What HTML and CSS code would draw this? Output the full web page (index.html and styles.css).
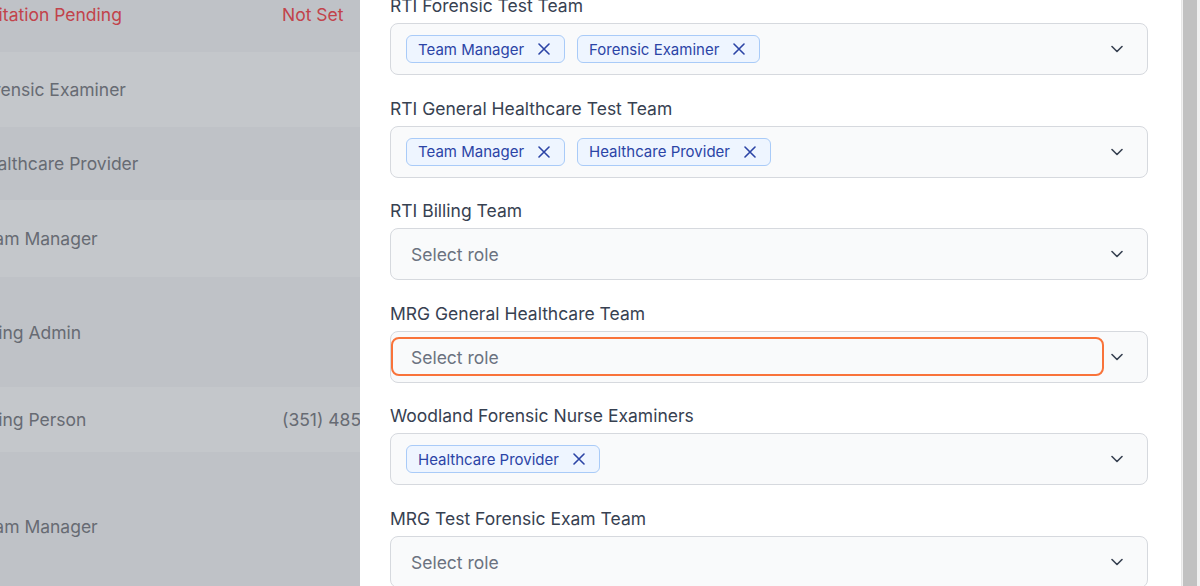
FILE: index.html
```html
<!DOCTYPE html>
<html lang="en">
<head>
<meta charset="utf-8">
<title>Team roles</title>
<link rel="stylesheet" href="styles.css">
</head>
<body>
<div class="screen">
  <div class="backdrop">
    <div class="table">
      <div class="row dark h76"><span class="role red">Invitation Pending</span><span class="phone red">Not Set</span></div>
      <div class="row light h75"><span class="role">Forensic Examiner</span><span class="phone"></span></div>
      <div class="row dark h73"><span class="role">Healthcare Provider</span><span class="phone"></span></div>
      <div class="row light h77"><span class="role">Team Manager</span><span class="phone"></span></div>
      <div class="row dark h110"><span class="role">Billing Admin</span><span class="phone"></span></div>
      <div class="row light h65"><span class="role">Billing Person</span><span class="phone">(351) 485-2210</span></div>
      <div class="row dark h148"><span class="role">Team Manager</span><span class="phone"></span></div>
    </div>
  </div>

  <div class="panel">
    <div class="form">
      <div class="field">
        <div class="label">RTI Forensic Test Team</div>
        <div class="select">
          <div class="value chips">
            <span class="chip">Team Manager<svg class="x" viewBox="0 0 12 12"><path d="M1 1L11 11M11 1L1 11"/></svg></span>
            <span class="chip">Forensic Examiner<svg class="x" viewBox="0 0 12 12"><path d="M1 1L11 11M11 1L1 11"/></svg></span>
          </div>
          <div class="chev"><svg viewBox="0 0 12 8"><path d="M1 1.5L6 6.5L11 1.5"/></svg></div>
        </div>
      </div>

      <div class="field">
        <div class="label">RTI General Healthcare Test Team</div>
        <div class="select">
          <div class="value chips">
            <span class="chip">Team Manager<svg class="x" viewBox="0 0 12 12"><path d="M1 1L11 11M11 1L1 11"/></svg></span>
            <span class="chip">Healthcare Provider<svg class="x" viewBox="0 0 12 12"><path d="M1 1L11 11M11 1L1 11"/></svg></span>
          </div>
          <div class="chev"><svg viewBox="0 0 12 8"><path d="M1 1.5L6 6.5L11 1.5"/></svg></div>
        </div>
      </div>

      <div class="field">
        <div class="label">RTI Billing Team</div>
        <div class="select">
          <div class="value placeholder">Select role</div>
          <div class="chev"><svg viewBox="0 0 12 8"><path d="M1 1.5L6 6.5L11 1.5"/></svg></div>
        </div>
      </div>

      <div class="field">
        <div class="label">MRG General Healthcare Team</div>
        <div class="select">
          <div class="value placeholder focused">Select role</div>
          <div class="chev"><svg viewBox="0 0 12 8"><path d="M1 1.5L6 6.5L11 1.5"/></svg></div>
        </div>
      </div>

      <div class="field">
        <div class="label">Woodland Forensic Nurse Examiners</div>
        <div class="select">
          <div class="value chips">
            <span class="chip">Healthcare Provider<svg class="x" viewBox="0 0 12 12"><path d="M1 1L11 11M11 1L1 11"/></svg></span>
          </div>
          <div class="chev"><svg viewBox="0 0 12 8"><path d="M1 1.5L6 6.5L11 1.5"/></svg></div>
        </div>
      </div>

      <div class="field">
        <div class="label">MRG Test Forensic Exam Team</div>
        <div class="select">
          <div class="value placeholder">Select role</div>
          <div class="chev"><svg viewBox="0 0 12 8"><path d="M1 1.5L6 6.5L11 1.5"/></svg></div>
        </div>
      </div>
    </div>
  </div>

  <div class="scrollbar"><div class="thumb"></div></div>
</div>
</body>
</html>
```

FILE: styles.css
```css
* { box-sizing: border-box; }

html, body {
  margin: 0;
  padding: 0;
  width: 1200px;
  height: 586px;
  overflow: hidden;
  font-family: Inter, "Noto Sans", "Liberation Sans", sans-serif;
}

.screen {
  display: flex;
  width: 1200px;
  height: 586px;
  overflow: hidden;
}

/* dimmed page behind the drawer */
.backdrop {
  width: 360px;
  flex: none;
  height: 586px;
  overflow: hidden;
  background: #bfc2c7;
}

.table {
  margin: -24px 0 0 -26px;
  width: 400px;
}

.row {
  display: flex;
  align-items: center;
  font-size: 17.5px;
  color: #676b73;
}

.row.dark { background: #bfc2c7; }
.row.light { background: #c4c7cb; }

.h76 { height: 76px; }
.h75 { height: 75px; }
.h73 { height: 73px; }
.h77 { height: 77px; }
.h110 { height: 110px; }
.h65 { height: 65px; }
.h148 { height: 148px; }

.role {
  width: 308px;
  flex: none;
  white-space: nowrap;
}

.phone {
  white-space: nowrap;
}

.red { color: #c2434b; }

/* drawer */
.panel {
  flex: 1;
  height: 586px;
  overflow: hidden;
  background: #ffffff;
  padding: 0 33px 0 30px;
}

.form {
  margin-top: -6px;
}

.field {
  margin-bottom: 21.6px;
}

.label {
  font-size: 17.5px;
  line-height: 24px;
  color: #374151;
  margin-bottom: 5px;
  white-space: nowrap;
}

.select {
  display: flex;
  align-items: stretch;
  min-height: 52px;
  border: 1px solid #d6d9de;
  border-radius: 8px;
  background: #f9fafb;
}

.value {
  flex: 1;
  display: flex;
  align-items: center;
}

.value.chips {
  padding: 11px 15px;
  gap: 12px;
}

.value.placeholder {
  padding: 1px 20px 0;
  font-size: 17.5px;
  color: #6b7280;
}

.value.focused {
  margin: 5px 0 6px 0;
  padding: 2px 18px 0;
  border: 2px solid #f9733a;
  border-radius: 8px;
}

.chip {
  display: inline-flex;
  align-items: center;
  height: 28px;
  padding: 0 14px 0 11px;
  gap: 14px;
  border: 1px solid #a9cbf8;
  border-radius: 6px;
  background: #eef5ff;
  color: #2b44a6;
  font-size: 15px;
  white-space: nowrap;
}

.x {
  width: 12px;
  height: 12px;
  fill: none;
  stroke: #2b44a6;
  stroke-width: 1.6;
  stroke-linecap: round;
}

.chev {
  width: 43px;
  flex: none;
  display: flex;
  align-items: center;
  padding-left: 7px;
}

.chev svg {
  width: 12px;
  height: 8px;
  fill: none;
  stroke: #374151;
  stroke-width: 1.6;
  stroke-linecap: round;
  stroke-linejoin: round;
}

.scrollbar {
  width: 19px;
  flex: none;
  height: 586px;
  background: #f1f1f1;
  border-left: 1px solid #e6e6e6;
  padding: 0 3px 0 1px;
}

.thumb {
  height: 100%;
  background: #c1c1c1;
}
```
